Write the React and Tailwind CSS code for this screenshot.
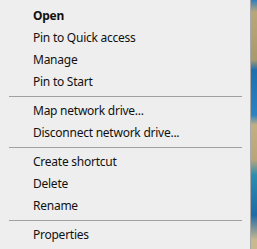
const GROUPS = [
  ['Open', 'Pin to Quick access', 'Manage', 'Pin to Start'],
  ['Map network drive...', 'Disconnect network drive...'],
  ['Create shortcut', 'Delete', 'Rename'],
  ['Properties'],
]

function Item({ label, bold }) {
  return (
    <div className={`h-[22px] flex items-center pl-[33px] text-[12px] tracking-[-0.25px] text-[#111] ${bold ? 'font-bold' : ''}`}>
      {label}
    </div>
  )
}

export default function App() {
  return (
    <div className="w-[257px] h-[249px] flex overflow-hidden font-['Noto_Sans',sans-serif]">
      <div className="w-[251px] h-full bg-[#eeeeee] pt-[5px] border-r border-[#a9a9a9]">
        {GROUPS.map((group, gi) => (
          <div key={gi}>
            {gi > 0 && (
              <div className="h-[7px] flex items-center pl-[9px] pr-[8px]">
                <div className="h-px w-full bg-[#a0a0a0]" />
              </div>
            )}
            {group.map(label => (
              <Item key={label} label={label} bold={label === 'Open'} />
            ))}
          </div>
        ))}
      </div>
      {/* desktop peeking out on the right */}
      <div className="flex-1 h-full bg-[linear-gradient(180deg,#2f7fc0_0px,#b9a77a_12px,#a89a6c_60px,#1f6fae_70px,#2a83c4_115px,#c2b083_125px,#b8a57a_160px,#2b8fb0_175px,#1e6aa8_215px,#c9b98e_240px)]" />
    </div>
  )
}
